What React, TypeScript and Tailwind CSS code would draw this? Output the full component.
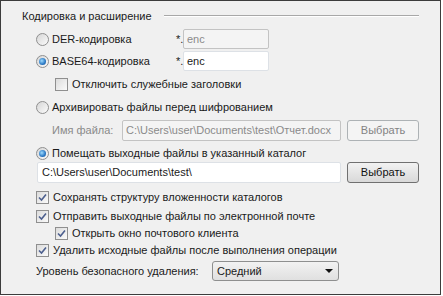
import React from 'react';

const font = { fontFamily: '"Liberation Sans", "DejaVu Sans", sans-serif' };

function Radio({ checked, label, disabled }: { checked?: boolean; label: string; disabled?: boolean }) {
  return (
    <div className="flex items-center">
      <div className="w-[13px] h-[13px] rounded-full border border-[#8f8f8f] bg-gradient-to-br from-[#d6d6d6] to-[#fbfbfb] flex items-center justify-center">
        {checked && (
          <div className="w-[7px] h-[7px] rounded-full bg-[radial-gradient(circle_at_40%_40%,#9fdcff,#2a78c4_60%,#1b4f8f)]" />
        )}
      </div>
      <span className={`ml-[3px] whitespace-nowrap ${disabled ? 'text-[#8a8a8a]' : 'text-[#1a1a1a]'}`}>{label}</span>
    </div>
  );
}

function Checkbox({ label, checked = true }: { label: string; checked?: boolean }) {
  return (
    <div className="flex items-center">
      <div className="w-[13px] h-[13px] border border-[#8f8f8f] bg-gradient-to-br from-[#dcdcdc] to-[#fafafa] flex items-center justify-center">
        {checked && (
          <svg width="9" height="9" viewBox="0 0 9 9">
            <path d="M1 4.5 L3.5 7 L8 1.5" fill="none" stroke="#4c5f8e" strokeWidth="1.6" />
          </svg>
        )}
      </div>
      <span className="ml-[4px] whitespace-nowrap text-[#1a1a1a]">{label}</span>
    </div>
  );
}

function Btn({ disabled }: { disabled?: boolean }) {
  return disabled ? (
    <div className="ml-[6px] w-[72px] h-[21px] rounded-[3px] border border-[#adb2b5] bg-[#f4f4f4] flex items-center justify-center text-[#838383]">
      Выбрать
    </div>
  ) : (
    <div className="ml-[6px] w-[72px] h-[21px] rounded-[3px] border border-[#707070] bg-gradient-to-b from-[#f2f2f2] to-[#d9d9d9] flex items-center justify-center text-[#111]">
      Выбрать
    </div>
  );
}

export default function App() {
  return (
    <div className="w-[443px] h-[296px] bg-white" style={font}>
      <div className="w-[441px] h-[295px] border border-[#3c3c3c] bg-[#f0f0f0] text-[11px] leading-none">
        {/* title */}
        <div className="mt-[7px] h-[16px] flex items-center pl-[21px] pr-[21px]">
          <span className="text-[#1a1a1a]">Кодировка и расширение</span>
          <div className="flex-1 ml-[12px] border-t border-b border-t-[#a8a8a8] border-b-white" />
        </div>

        <div className="pl-[35px]">
          <div className="mt-[5px] h-[20px] flex items-center">
            <div className="w-[140px]">
              <Radio label="DER-кодировка" />
            </div>
            <span className="w-[7px] text-[#1a1a1a] whitespace-nowrap">*.</span>
            <div className="w-[86px] h-[20px] border border-[#c3c3c3] rounded-[2px] bg-[#f4f4f4] flex items-center pl-[3px] text-[#8a8a8a]">
              enc
            </div>
          </div>

          <div className="mt-[2px] h-[20px] flex items-center">
            <div className="w-[140px]">
              <Radio checked label="BASE64-кодировка" />
            </div>
            <span className="w-[7px] text-[#1a1a1a] whitespace-nowrap">*.</span>
            <div className="w-[86px] h-[20px] border border-[#dde1e6] rounded-[2px] bg-white flex items-center pl-[3px] text-[#1a1a1a]">
              enc
            </div>
          </div>

          <div className="mt-[5px] h-[16px] flex items-center pl-[19px]">
            <Checkbox checked={false} label="Отключить служебные заголовки" />
          </div>

          <div className="mt-[7px] h-[16px] flex items-center">
            <Radio label="Архивировать файлы перед шифрованием" />
          </div>

          <div className="mt-[5px] h-[21px] flex items-center pl-[16px]">
            <span className="w-[70px] text-[#8a8a8a]">Имя файла:</span>
            <div className="w-[219px] h-[21px] border border-[#c3c3c3] rounded-[2px] bg-[#f4f4f4] flex items-center pl-[3px] text-[#8a8a8a] overflow-hidden whitespace-nowrap">
              C:\Users\user\Documents\test\Отчет.docx
            </div>
            <Btn disabled />
          </div>

          <div className="mt-[4px] h-[16px] flex items-center">
            <Radio checked label="Помещать выходные файлы в указанный каталог" />
          </div>

          <div className="mt-[1px] h-[21px] flex items-center">
            <div className="ml-[1px] w-[304px] h-[21px] border border-[#dde1e6] rounded-[2px] bg-white flex items-center pl-[4px] text-[#1a1a1a]">
              C:\Users\user\Documents\test\
            </div>
            <Btn />
          </div>

          <div className="mt-[6px] h-[16px] flex items-center">
            <Checkbox label="Сохранять структуру вложенности каталогов" />
          </div>
          <div className="mt-[3px] h-[16px] flex items-center">
            <Checkbox label="Отправить выходные файлы по электронной почте" />
          </div>
          <div className="mt-[1px] h-[16px] flex items-center pl-[19px]">
            <Checkbox label="Открыть окно почтового клиента" />
          </div>
          <div className="mt-[1px] h-[16px] flex items-center">
            <Checkbox label="Удалить исходные файлы после выполнения операции" />
          </div>

          <div className="mt-[3px] h-[20px] flex items-center">
            <span className="w-[176px] whitespace-nowrap text-[#1a1a1a]">Уровень безопасного удаления:</span>
            <div className="w-[127px] h-[20px] rounded-[3px] border border-[#8e8f8f] bg-gradient-to-b from-[#f2f2f2] to-[#e0e0e0] flex items-center justify-between pl-[4px] pr-[5px] text-[#1a1a1a]">
              <span>Средний</span>
              <svg width="8" height="4" viewBox="0 0 8 4">
                <path d="M0 0 H8 L4 4 Z" fill="#111" />
              </svg>
            </div>
          </div>
        </div>
      </div>
    </div>
  );
}
